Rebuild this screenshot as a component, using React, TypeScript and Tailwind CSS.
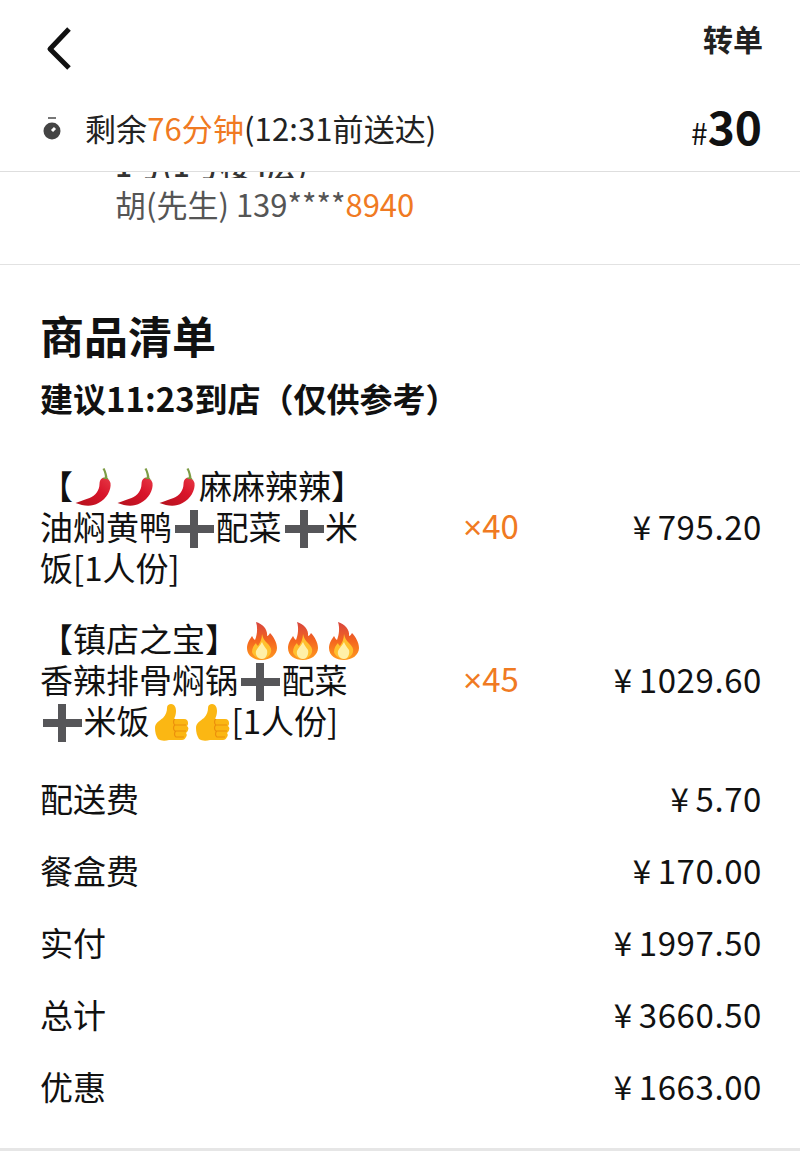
import type { ReactNode } from "react";

const FONT = "font-['Noto_Sans_CJK_SC','Liberation_Sans',sans-serif]";

function Chili({ id }: { id: string }) {
  return (
    <svg viewBox="0 0 41 40" className="inline-block w-[42px] h-[40px] align-[-9px]">
      <defs>
        <linearGradient id={id} x1="0" y1="1" x2="1" y2="0">
          <stop offset="0" stopColor="#b3121d" />
          <stop offset="0.6" stopColor="#d9142a" />
          <stop offset="1" stopColor="#e63946" />
        </linearGradient>
      </defs>
      <path d="M2 35c8 3 16 4 23 0 8-4 13-13 12-20-1-4-5-6-8-5-2 1-3 3-3 6 0 6-4 12-10 14-5 2-9 3-14 5z" fill={`url(#${id})`} />
      <path d="M29 10c2-1 5-1 7 2-1-1-3-1-4-1-1 0-2 0-3-1z" fill="#6f9a35" />
      <path d="M31 11c1-2 0-7-2-10l2-1c2 4 3 8 3 11z" fill="#7d9c45" />
    </svg>
  );
}

function Fire({ id, first }: { id: string; first?: boolean }) {
  return (
    <svg
      viewBox="0 0 41 40"
      className={first ? "inline-block w-[41px] h-[40px] align-[-9px] ml-[3px]" : "inline-block w-[41px] h-[40px] align-[-9px]"}
    >
      <defs>
        <linearGradient id={id} x1="0" y1="0" x2="0" y2="1">
          <stop offset="0" stopColor="#d8453f" />
          <stop offset="0.5" stopColor="#f4661f" />
          <stop offset="1" stopColor="#ff9a1f" />
        </linearGradient>
      </defs>
      <path d="M15 1c7 2 12 8 11 14 1 0 2-1 3-3 3 3 7 9 7 15 0 7-7 12-15 12S6 35 6 27c0-5 3-9 5-12 1 1 1 3 3 4 2-5 3-12 1-18z" fill={`url(#${id})`} />
      <path d="M21 13c1 4 2 6 5 9 3 3 5 6 4 9-1 4-5 7-9 7s-9-3-10-7c0-4 2-7 4-9 0 1 1 2 2 3 2-3 4-7 4-12z" fill="#ffc02e" />
      <path d="M21 21c1 3 3 5 5 8 1 4-1 9-5 9s-7-4-6-8c1-3 4-5 6-9z" fill="#fff0a8" />
    </svg>
  );
}

function Thumb() {
  return (
    <svg viewBox="0 0 41 40" className="inline-block w-[41px] h-[40px] align-[-9px]">
      <path d="M5 25c0-5 4-7 8-10 3-3 4-7 4-10 0-3 2-4 4-4 4 0 5 4 5 7 0 3-1 6-2 8h10c3 0 4 2 4 4 0 1 0 2-1 3 1 1 2 2 1 4 0 1-1 2-2 3 1 1 1 3 0 4-1 2-2 3-4 3H19c-4 1-8 1-11-1-2-3-3-7-3-11z" fill="#fbb713" />
      <path d="M25 16c-2 1-2 5 0 6h11M25 22c-2 1-2 5 0 6h11M26 28c-2 1-2 5 0 6h8" stroke="#ec8f0c" strokeWidth="1.2" fill="none" />
    </svg>
  );
}

function Plus() {
  return (
    <svg viewBox="0 0 43.5 40" className="inline-block w-[43.5px] h-[40px] align-[-9px]">
      <path d="M18 1h8v15h16v8H26v15h-8V24H3v-8h15z" fill="#565659" />
    </svg>
  );
}

function Money({ value }: { value: string }) {
  return (
    <span className="tracking-[0.6px]">
      ¥<span className="ml-[6px]">{value}</span>
    </span>
  );
}

function Row({ label, value }: { label: string; value: string }) {
  return (
    <div className="flex h-[72px] items-center justify-between text-[33px] text-[#111]">
      <span>{label}</span>
      <Money value={value} />
    </div>
  );
}

function Item({ lines, qty, price }: { lines: ReactNode[]; qty: string; price: string }) {
  return (
    <div className="flex items-center text-[33px] text-[#111]">
      <div className="w-[423px] shrink-0 whitespace-nowrap">
        {lines.map((l, i) => (
          <div key={i} className="h-[41px] leading-[41px]">
            {l}
          </div>
        ))}
      </div>
      <span className="text-[#f07a22]">
        <span className="font-['Liberation_Sans',sans-serif]">×</span>
        {qty}
      </span>
      <span className="ml-auto">
        <Money value={price} />
      </span>
    </div>
  );
}

export default function App() {
  return (
    <div className={`${FONT} w-[800px] h-[1171px] bg-white overflow-hidden`}>
      <header className="h-[172px] border-b border-[#dedede] pl-10 pr-[37px] relative z-10 bg-white">
        <div className="flex h-[93px] justify-between items-start">
          <svg viewBox="0 0 40 50" className="w-[40px] h-[50px] mt-[24px] -ml-[2px]">
            <path d="M31 5 L12 25 L31 44" stroke="#111" strokeWidth="5" fill="none" strokeLinejoin="round" />
          </svg>
          <span className="text-[30px] font-bold leading-[76px] text-[#222]">转单</span>
        </div>
        <div className="flex items-center justify-between h-[70px] pr-[1px]">
          <div className="flex items-center text-[31px] tracking-[0.1px] text-[#222]">
            <svg viewBox="0 0 20 26" className="w-[20px] h-[26px] mr-[23px] ml-[2px] mt-[1px]">
              <rect x="6" y="1" width="8" height="2" fill="#777" />
              <circle cx="10" cy="15" r="8.5" fill="#444" />
              <path d="M10 15l3-3" stroke="#fff" strokeWidth="3" />
            </svg>
            <span>
              剩余<span className="text-[#f07a22]">76分钟</span>(12:31前送达)
            </span>
          </div>
          <div className="flex items-baseline font-bold text-[#111]">
            <span className="text-[30px] font-normal">#</span>
            <span className="text-[46px] leading-none">30</span>
          </div>
        </div>
      </header>

      <section className="h-[93px] border-b border-[#e2e2e2] overflow-hidden pl-[115px]">
        <div className="h-[6px] overflow-hidden whitespace-nowrap">
          <div className="-mt-[24px] text-[30px] leading-[33px] font-medium text-[#333]">1号(1号楼4层)</div>
        </div>
        <div className="mt-[4px] text-[31px] leading-[44px] text-[#555]">
          胡(先生) 139****<span className="text-[#f07a22]">8940</span>
        </div>
      </section>

      <main className="pl-10 pr-[38px]">
        <h1 className="text-[44px] font-bold leading-[60px] mt-[40px] text-[#111]">商品清单</h1>
        <p className="text-[33px] font-bold leading-[44px] mt-[11px] text-[#111]">建议11:23到店（仅供参考）</p>
        <div className="mt-[45px] flex flex-col gap-[30px]">
          <Item
            qty="40"
            price="795.20"
            lines={[
              <>
                【<Chili id="c1" />
                <Chili id="c2" />
                <Chili id="c3" />麻麻辣辣】
              </>,
              <>
                油焖黄鸭
                <Plus />配菜
                <Plus />米
              </>,
              <>饭[1人份]</>,
            ]}
          />
          <Item
            qty="45"
            price="1029.60"
            lines={[
              <>
                【镇店之宝】
                <Fire id="f1" first />
                <Fire id="f2" />
                <Fire id="f3" />
              </>,
              <>
                香辣排骨焖锅
                <Plus />配菜
              </>,
              <>
                <Plus />米饭
                <Thumb />
                <Thumb />
                [1人份]
              </>,
            ]}
          />
        </div>
        <div className="mt-[22px]">
          <Row label="配送费" value="5.70" />
          <Row label="餐盒费" value="170.00" />
          <Row label="实付" value="1997.50" />
          <Row label="总计" value="3660.50" />
          <Row label="优惠" value="1663.00" />
        </div>
      </main>
      <div className="mt-[25px] h-[3px] bg-[#e6e6e6]" />
    </div>
  );
}
